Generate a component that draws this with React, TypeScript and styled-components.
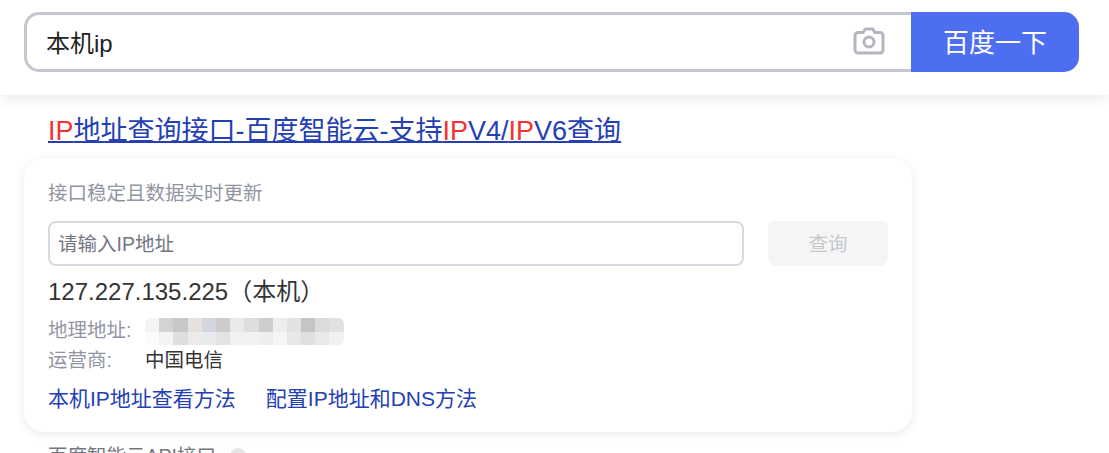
import React from 'react';
import styled, { createGlobalStyle } from 'styled-components';

const FONT = '"Liberation Sans", "Noto Sans CJK SC", sans-serif';

const GlobalStyle = createGlobalStyle`
    html, body {
        margin: 0;
        padding: 0;
        background: #fff;
        overflow: hidden;
    }
    body {
        height: 453px;
        font-family: ${FONT};
    }
`;

const Header = styled.header`
    height: 95px;
    box-sizing: border-box;
    padding: 12px 30px 0 24px;
    background: #fff;
    box-shadow: 0 2px 14px rgba(0, 0, 0, 0.1);
    position: relative;
`;

const SearchForm = styled.div`
    display: flex;
    height: 60px;
`;

const SearchBox = styled.div`
    flex: 1;
    display: flex;
    align-items: center;
    box-sizing: border-box;
    padding: 0 25px 0 19px;
    border: 3px solid #c4c7ce;
    border-right: 0;
    border-radius: 15px 0 0 15px;
`;

const SearchText = styled.span`
    flex: 1;
    font-size: 24px;
    color: #222;
    margin-bottom: 2px;
`;

const CameraWrap = styled.span`
    display: flex;
    margin-bottom: 2px;
    margin-right: 1px;
`;

const SearchButton = styled.div`
    width: 168px;
    box-sizing: border-box;
    padding-bottom: 3px;
    display: flex;
    align-items: center;
    justify-content: center;
    background: #4e6ef2;
    color: #fff;
    font-size: 26px;
    border-radius: 0 15px 15px 0;
`;

const Main = styled.main`
    padding: 16px 0 0 24px;
    width: 888px;
`;

const Title = styled.a`
    display: block;
    margin-left: 24px;
    font-size: 27px;
    line-height: 40px;
    color: #2440b3;
    text-decoration: underline;
    text-decoration-thickness: 2px;
    white-space: nowrap;
`;

const Hit = styled.em`
    font-style: normal;
    color: #f73131;
`;

const Card = styled.section`
    margin-top: 7px;
    height: 274px;
    box-sizing: border-box;
    padding: 21px 24px 0;
    border-radius: 20px;
    background: #fff;
    box-shadow: 0 2px 10px rgba(0, 0, 0, 0.09);
`;

const Subtitle = styled.div`
    font-size: 19.5px;
    line-height: 28px;
    color: #9195a3;
`;

const QueryRow = styled.div`
    display: flex;
    gap: 24px;
    margin-top: 14px;
`;

const QueryInput = styled.div`
    flex: 1;
    height: 45px;
    box-sizing: border-box;
    display: flex;
    align-items: center;
    padding: 0 8px 2px;
    border: 2px solid #d7d9e0;
    border-radius: 8px;
    font-size: 19.5px;
    color: #73767f;
`;

const QueryButton = styled.div`
    width: 120px;
    height: 45px;
    box-sizing: border-box;
    padding-bottom: 3px;
    display: flex;
    align-items: center;
    justify-content: center;
    border-radius: 8px;
    background: #f5f5f6;
    color: #c4c7ce;
    font-size: 19.5px;
`;

const IpLine = styled.div`
    margin-top: 9px;
    font-size: 24px;
    line-height: 34px;
    color: #333;
`;

const InfoRow = styled.div<{ $top: number }>`
    display: flex;
    align-items: center;
    height: 31px;
    margin-top: ${props => props.$top}px;
    font-size: 19.5px;
`;

const InfoLabel = styled.span`
    width: 97px;
    color: #9195a3;
`;

const InfoValue = styled.span`
    color: #333;
`;

const Mosaic = styled.div`
    display: grid;
    grid-template-columns: repeat(14, 14.2px);
    grid-auto-rows: 13.5px;
    margin-top: 6px;
    border-radius: 6px;
    overflow: hidden;
`;

const MosaicCell = styled.i<{ $shade: string }>`
    background: ${props => props.$shade};
`;

const LinkRow = styled.div`
    display: flex;
    gap: 30px;
    margin-top: 10px;
    font-size: 21px;
    line-height: 30px;
`;

const CardLink = styled.a`
    color: #2440b3;
`;

const Footer = styled.div`
    margin: 10px 0 0 24px;
    display: flex;
    align-items: center;
    gap: 14px;
    font-size: 19.5px;
    line-height: 28px;
    color: #73767f;
`;

const HelpDot = styled.span`
    width: 16px;
    height: 16px;
    border-radius: 50%;
    background: #e6e6e8;
`;

const mosaicShades = [
    '#f4f4f4', '#d2d4d4', '#c9c8c8', '#e6e0e0', '#d3d6dc', '#cdcbcc', '#e9e9e9',
    '#dcdede', '#cdcdcd', '#ededee', '#e2e2e3', '#c5c5c5', '#dadbdb', '#e1e1e3',
    '#fbfbfb', '#f2f3f3', '#dedede', '#efeaea', '#e8e9eb', '#e4e3e4', '#f1f1f1',
    '#f1f1f1', '#eeeeed', '#f5f5f5', '#e8e8e8', '#dfdfdf', '#e9e9e9', '#f1f1f2',
];

const CameraIcon = () => (
    <svg width="32" height="28" viewBox="0 0 32 28" fill="none" stroke="#b4b6bf" strokeWidth="3">
        <path d="M5 5.5h5.2l2-3.5h7.6l2 3.5H27a3 3 0 0 1 3 3V23a3 3 0 0 1-3 3H5a3 3 0 0 1-3-3V8.5a3 3 0 0 1 3-3z" strokeLinejoin="round" />
        <circle cx="16" cy="15" r="5" />
    </svg>
);

const App = () => {
    return (
        <>
            <GlobalStyle />
            <Header>
                <SearchForm>
                    <SearchBox>
                        <SearchText>本机ip</SearchText>
                        <CameraWrap>
                            <CameraIcon />
                        </CameraWrap>
                    </SearchBox>
                    <SearchButton>百度一下</SearchButton>
                </SearchForm>
            </Header>
            <Main>
                <Title>
                    <Hit>IP</Hit>地址查询接口-百度智能云-支持<Hit>IP</Hit>V4/<Hit>IP</Hit>V6查询
                </Title>
                <Card>
                    <Subtitle>接口稳定且数据实时更新</Subtitle>
                    <QueryRow>
                        <QueryInput>请输入IP地址</QueryInput>
                        <QueryButton>查询</QueryButton>
                    </QueryRow>
                    <IpLine>127.227.135.225（本机）</IpLine>
                    <InfoRow $top={4}>
                        <InfoLabel>地理地址:</InfoLabel>
                        <Mosaic>
                            {mosaicShades.map((shade, i) => (
                                <MosaicCell key={i} $shade={shade} />
                            ))}
                        </Mosaic>
                    </InfoRow>
                    <InfoRow $top={-1}>
                        <InfoLabel>运营商:</InfoLabel>
                        <InfoValue>中国电信</InfoValue>
                    </InfoRow>
                    <LinkRow>
                        <CardLink>本机IP地址查看方法</CardLink>
                        <CardLink>配置IP地址和DNS方法</CardLink>
                    </LinkRow>
                </Card>
                <Footer>
                    百度智能云API接口
                    <HelpDot />
                </Footer>
            </Main>
        </>
    );
};

export default App;
